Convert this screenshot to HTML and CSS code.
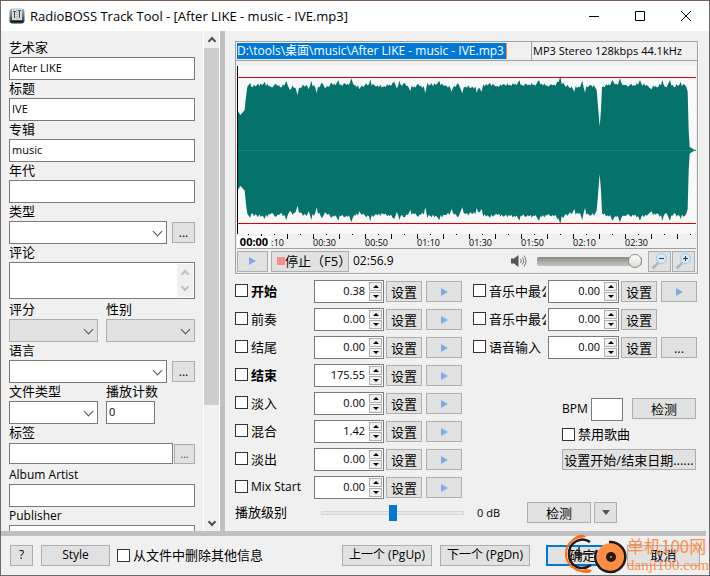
FILE: index.html
```
<!DOCTYPE html>
<html lang="zh-CN">
<head>
    <meta charset="utf-8">
    <title>RadioBOSS Track Tool</title>
    <link rel="stylesheet" href="styles.css">
</head>
<body>
<div class="window">
    <header class="titlebar">
        <svg class="app-icon" width="16" height="16" viewBox="0 0 16 16">
            <defs>
                <linearGradient id="metal" x1="0" y1="0" x2="0" y2="1">
                    <stop offset="0" stop-color="#aeb6bb"/>
                    <stop offset="0.6" stop-color="#59656d"/>
                    <stop offset="1" stop-color="#1f2a33"/>
                </linearGradient>
            </defs>
            <rect x="0.5" y="0.5" width="15" height="15" rx="3" fill="url(#metal)"/>
            <path d="M3 1v11h10V1z" fill="#d5dadd"/>
            <path d="M5.500 3v7M10.500 3v7" stroke="#3d464d" stroke-width="1"/>
            <path d="M4 3.500h3M9 2.500h3" stroke="#555"/>
            <path d="M8 2v9" stroke="#8d969c" stroke-dasharray="1 1"/>
            <path d="M2 13.500h12" stroke="#101820"/>
        </svg>
        <h1>RadioBOSS Track Tool - [After LIKE - music - IVE.mp3]</h1>
        <div class="win-buttons">
            <button type="button" aria-label="Minimize"><svg width="12" height="12"><path d="M1 6.500h10"/></svg></button>
            <button type="button" aria-label="Maximize"><svg width="12" height="12"><path d="M1.500 1.500h9v9h-9z"/></svg></button>
            <button type="button" aria-label="Close"><svg width="12" height="12"><path d="M1 1l10 10M11 1L1 11"/></svg></button>
        </div>
    </header>

    <main class="main">
        <aside class="side">
            <form class="tags">
                <div class="field"><label for="artist">艺术家</label><input type="text" id="artist" value="After LIKE"></div>
                <div class="field"><label for="title">标题</label><input type="text" id="title" value="IVE"></div>
                <div class="field"><label for="album">专辑</label><input type="text" id="album" value="music"></div>
                <div class="field"><label for="year">年代</label><input type="text" id="year"></div>
                <div class="field">
                    <label for="genre">类型</label>
                    <div class="with-button">
                        <div class="combo"><select id="genre"><option></option></select></div>
                        <button type="button" class="dots">...</button>
                    </div>
                </div>
                <div class="field">
                    <label for="comment">评论</label>
                    <div class="memo">
                        <textarea id="comment"></textarea>
                        <div class="memo-scroll"><i class="chev up"></i><i class="chev"></i></div>
                    </div>
                </div>
                <div class="pair">
                    <div class="field"><label for="rating">评分</label><div class="combo off"><select id="rating" disabled><option></option></select></div></div>
                    <div class="field"><label for="gender">性别</label><div class="combo off"><select id="gender" disabled><option></option></select></div></div>
                </div>
                <div class="field">
                    <label for="lang">语言</label>
                    <div class="with-button">
                        <div class="combo"><select id="lang"><option></option></select></div>
                        <button type="button" class="dots">...</button>
                    </div>
                </div>
                <div class="pair">
                    <div class="field"><label for="ftype">文件类型</label><div class="combo"><select id="ftype"><option></option></select></div></div>
                    <div class="field"><label for="count">播放计数</label><input type="text" id="count" class="count" value="0"></div>
                </div>
                <div class="field">
                    <label for="tag">标签</label>
                    <div class="with-button tight">
                        <input type="text" id="tag">
                        <button type="button" class="dots blue">...</button>
                    </div>
                </div>
                <div class="field latin"><label for="albumartist">Album Artist</label><input type="text" id="albumartist"></div>
                <div class="field latin"><label for="publisher">Publisher</label><input type="text" id="publisher"></div>
            </form>
            <div class="scrollbar"><i class="chev up"></i><div class="thumb"></div><i class="chev"></i></div>
        </aside>

        <section class="editor">
            <div class="player">
                <div class="file-row">
                    <div class="path-cell"><input type="text" class="path" aria-label="File" value="D:\tools\桌面\music\After LIKE - music - IVE.mp3"></div>
                    <div class="format">MP3 Stereo 128kbps 44.1kHz</div>
                </div>
                <svg class="wave" viewBox="0 0 1377 504" preserveAspectRatio="none">
                    <polygon id="wave" fill="#05736c"/>
                    <path d="M0 253.500H1377" stroke="#0b8a84" stroke-width="3"/>
                    <path d="M0 34.500H1377M0 472.500H1377" stroke="#dc0000" stroke-width="3"/>
                    <path d="M1.500 0V504" stroke="#000" stroke-width="3"/>
                </svg>
                <div class="ruler">
                    <div class="ruler-labels" id="ruler"></div>
                    <b class="position">00:00</b>
                </div>
                <div class="transport">
                    <button type="button" class="btn play" aria-label="Play"></button>
                    <button type="button" class="btn stop"><i></i>停止（F5）</button>
                    <span class="time">02:56.9</span>
                    <svg class="speaker" width="16" height="14" viewBox="0 0 16 14">
                        <path d="M0 4.500h3L7.500 1v12L3 9.500H0z" fill="#555"/>
                        <path d="M9.500 5q1.500 2 0 4M11.500 3.500q2.500 3.500 0 7M13 1.500q4 5.500 0 11" fill="none" stroke="#777"/>
                    </svg>
                    <input type="range" class="volume" aria-label="Volume" min="0" max="100" value="100">
                    <button type="button" class="btn zoom" aria-label="Zoom out">
                        <svg width="17" height="17" viewBox="0 0 17 17">
                            <path d="M1.500 15.500L7 10" stroke="#a9b4bf" stroke-width="2.500"/>
                            <circle cx="10.500" cy="5.500" r="5" fill="#d3eafc" stroke="#9cc6e8"/>
                            <path d="M8 5.500h5" stroke="#333"/>
                        </svg>
                    </button>
                    <button type="button" class="btn zoom" aria-label="Zoom in">
                        <svg width="17" height="17" viewBox="0 0 17 17">
                            <path d="M1.500 15.500L7 10" stroke="#a9b4bf" stroke-width="2.500"/>
                            <circle cx="10.500" cy="5.500" r="5" fill="#d3eafc" stroke="#9cc6e8"/>
                            <path d="M8 5.500h5M10.500 3v5" stroke="#333"/>
                        </svg>
                    </button>
                </div>
            </div>

            <div class="cues">
                <div class="cue-list" id="cuesLeft"></div>
                <div class="cue-right">
                    <div class="cue-list wide" id="cuesRight"></div>
                    <div class="extras">
                        <div class="bpm">
                            <label for="bpm">BPM</label>
                            <input type="text" id="bpm">
                            <button type="button" class="btn detect">检测</button>
                        </div>
                        <label class="check"><input type="checkbox"><span>禁用歌曲</span></label>
                        <button type="button" class="btn dates">设置开始/结束日期......</button>
                    </div>
                </div>
            </div>

            <div class="level">
                <label for="level">播放级别</label>
                <input type="range" id="level" class="gain" min="-10" max="10" value="0">
                <span class="db">0 dB</span>
                <button type="button" class="btn detect">检测</button>
                <button type="button" class="btn drop" aria-label="More"><i></i></button>
            </div>
        </section>
    </main>

    <footer class="footer">
        <button type="button" class="btn help">?</button>
        <button type="button" class="btn style">Style</button>
        <label class="check"><input type="checkbox"><span>从文件中删除其他信息</span></label>
        <div class="nav">
            <button type="button" class="btn">上一个 (PgUp)</button>
            <button type="button" class="btn">下一个 (PgDn)</button>
        </div>
        <button type="button" class="btn ok">确定</button>
        <button type="button" class="btn cancel">取消</button>
        <div class="stamp">
            <svg width="64" height="42" viewBox="0 0 64 42">
                <path d="M21 3C8 4 2 14 3 23c1 8 8 15 21 16" fill="none" stroke="#ff6d0a" stroke-width="2"/>
                <path d="M10 6q5-5 11-4l2 2-7 1zM17 38l9 2 3-3-6-1z" fill="#ff6d0a"/>
                <path d="M27 9C18 3 6 9 6 21s12 18 22 11" fill="none" stroke="#231815" stroke-width="2.500"/>
                <path d="M12 21h18M16 14v13" stroke="#231815" stroke-width="1.500"/>
                <circle cx="48" cy="24" r="14" fill="#ff8d42"/>
                <path d="M46 9a15 15 0 1 1-12 8" fill="none" stroke="#231815" stroke-width="2.500"/>
                <circle cx="48" cy="24" r="5" fill="#231815"/>
                <circle cx="48" cy="24" r="1" fill="#ff8d42"/>
            </svg>
            <div class="stamp-text"><span>单机100网</span><span>danji100.com</span></div>
        </div>
    </footer>
</div>
<script src="script.js"></script>
</body>
</html>
```
FILE: styles.css
```
* {
    box-sizing: border-box;
}
body {
    margin: 0;
    background: #f0f0f0;
    color: #000;
    font: 12px/18px "Open Sans", "Noto Sans CJK SC", sans-serif;
}
button, input, select, textarea {
    font: inherit;
    color: inherit;
    margin: 0;
    border-radius: 0;
}
label, .btn {
    font-size: 13px;
    white-space: nowrap;
}
.window {
    display: flex;
    flex-direction: column;
    min-height: 100vh;
    border: 1px solid #6a6a6a;
    border-top-color: #7b6055;
    position: relative;
}

/* title bar */
.titlebar {
    display: flex;
    align-items: center;
    height: 30px;
    padding-left: 8px;
    background: #fff;
}
.titlebar h1 {
    flex: 1;
    margin: 0 0 0 5px;
    font-size: 13px;
    font-weight: normal;
}
.win-buttons {
    display: flex;
}
.win-buttons button {
    display: flex;
    align-items: center;
    justify-content: center;
    width: 46px;
    height: 30px;
    padding: 0;
    border: 0;
    background: none;
}
.win-buttons svg {
    fill: none;
    stroke: #000;
}

.main {
    display: flex;
    flex: 1;
}

/* tags */
.side {
    display: flex;
    width: 224px;
    height: 500px;
    border-right: 5px solid #c0c0c0;
    overflow: hidden;
}
.tags {
    flex: 1;
    padding: 8px 8px 0;
}
.field label {
    display: block;
    height: 18px;
    line-height: 16px;
}
.latin label {
    font-size: 12px;
    line-height: 18px;
}
input[type=text], select, textarea {
    display: block;
    width: 100%;
    height: 23px;
    padding: 0 2px 2px;
    border: 1px solid #7a7a7a;
    background: #fff;
    outline: none;
    font-size: 11px;
}
.with-button {
    display: flex;
    align-items: center;
    gap: 5px;
}
.with-button .combo, .with-button input {
    flex: 1;
}
.dots {
    width: 23px;
    height: 21px;
    padding: 0;
    border: 1px solid #adadad;
    background: #e1e1e1;
    line-height: 16px;
}
.tight {
    gap: 1px;
    margin: 1px 0 2px;
}
.tight input[type=text] {
    height: 21px;
}
.blue {
    width: 21px;
    height: 20px;
    font-size: 10px;
    color: #00507a;
}
.combo {
    position: relative;
}
.combo select {
    appearance: none;
}
.combo::after, .chev {
    content: "";
    width: 6px;
    height: 6px;
    border: solid #555;
    border-width: 0 1px 1px 0;
    transform: rotate(45deg);
}
.combo::after {
    position: absolute;
    right: 6px;
    top: 7px;
    pointer-events: none;
}
.off select {
    background: #e1e1e1;
    border-color: #adadad;
    opacity: 1;
}
.memo {
    display: flex;
    height: 37px;
    margin-bottom: 2px;
    padding: 1px;
    border: 1px solid #7a7a7a;
    background: #fff;
}
.memo textarea {
    flex: 1;
    height: 100%;
    border: 0;
    resize: none;
}
.memo-scroll {
    display: flex;
    flex-direction: column;
    align-items: center;
    justify-content: space-between;
    width: 16px;
    padding: 7px 0;
    background: #f0f0f0;
}
.chev {
    display: block;
    border-width: 0 2px 2px 0;
    border-color: #505050;
}
.chev.up {
    transform: rotate(225deg);
}
.memo .chev {
    border-color: #bfbfbf;
}
.pair {
    display: grid;
    grid-template-columns: 1fr 1fr;
    gap: 8px;
}
.count[type=text] {
    width: 49px;
}
.scrollbar {
    display: flex;
    flex-direction: column;
    align-items: center;
    width: 17px;
    padding: 7px 0 6px;
    border: solid #fff;
    border-width: 0 1px;
}
.scrollbar .thumb {
    width: 15px;
    height: 357px;
    margin: 4px 0 auto;
    background: #cdcdcd;
}

/* player */
.editor {
    flex: 1;
    min-width: 0;
    padding: 10px 11px 0 10px;
}
.player {
    border: 1px solid #a0a0a0;
    box-shadow: 1px 1px #fff;
}
.file-row {
    display: flex;
    height: 19px;
    border-bottom: 1px solid #a0a0a0;
}
.path-cell {
    flex: 1;
    padding: 1px;
}
.path-cell .path {
    width: 270px;
    height: 16px;
    padding: 0;
    border: 0;
    border-right: 1px solid #ff8728;
    background: #0078d7;
    color: #fff;
    font-size: 12px;
}
.format {
    width: 166px;
    padding-left: 1px;
    border-left: 1px solid #a0a0a0;
    font-size: 11px;
    white-space: nowrap;
}
.wave {
    display: block;
    width: calc(100% - 2px);
    height: 168px;
    margin: 5px 1px 0;
    background: #f9f9f9;
}
.ruler {
    position: relative;
    height: 15px;
    margin: 0 1px;
    border-bottom: 1px solid #a0a0a0;
    background:
        repeating-linear-gradient(90deg, transparent 0 24px, #000 24px 25px, transparent 25px 26px) 0 0 / 100% 5px no-repeat,
        repeating-linear-gradient(90deg, transparent 0 11px, #000 11px 12px, transparent 12px 26px) 0 0 / 100% 1px no-repeat;
}
.ruler-labels {
    display: flex;
    padding: 3px 0 0 24px;
    overflow: hidden;
}
.ruler-labels span {
    flex: none;
    width: 52px;
    font-size: 9px;
    line-height: 12px;
}
.position {
    position: absolute;
    left: 0;
    bottom: 0;
    width: 34px;
    background: #fff;
    font-size: 11px;
    line-height: 12px;
    text-align: center;
}
.transport {
    display: flex;
    align-items: center;
    height: 24px;
    padding: 0 2px 0 1px;
}
.btn {
    display: flex;
    align-items: center;
    justify-content: center;
    height: 21px;
    padding: 0;
    border: 1px solid #adadad;
    background: #e1e1e1;
}
.play::before {
    content: "";
    border: solid transparent;
    border-width: 4px 0 4px 7px;
    border-left-color: #7eaaea;
}
.transport .play {
    width: 31px;
}
.stop {
    justify-content: flex-start;
    width: 78px;
    margin: 0 4px 0 3px;
    padding-left: 5px;
}
.stop i {
    flex: none;
    width: 8px;
    height: 8px;
    background: #f98e8e;
}
.time {
    flex: 1;
}
.speaker {
    margin-right: 10px;
}
.zoom {
    width: 23px;
    margin-left: 1px;
}
input[type=range] {
    appearance: none;
    background: none;
}
.volume {
    width: 105px;
    height: 16px;
    margin-right: 5px;
}
.volume::-webkit-slider-runnable-track {
    height: 9px;
    border-radius: 2px;
    background: linear-gradient(#8c8a85, #c9c6c0);
}
.volume::-webkit-slider-thumb {
    appearance: none;
    width: 14px;
    height: 14px;
    margin-top: -3px;
    border: 1px solid #8a8a86;
    border-radius: 50%;
    background: linear-gradient(#fff, #dcdcd8);
}

/* cue points */
.cues {
    display: flex;
    justify-content: space-between;
    margin-top: 6px;
}
.cue {
    display: grid;
    grid-template-columns: 79px 70px 36px 36px;
    align-items: center;
    height: 28px;
    padding-bottom: 5px;
}
.cue:last-child {
    height: 26px;
    padding-bottom: 3px;
}
.wide .cue {
    grid-template-columns: 75px 71px 36px 36px;
}
.cue .btn {
    margin-left: 2px;
    width: 36px;
}
.cue .btn:last-child:not(.set) {
    margin-left: 6px;
}
.check {
    display: flex;
    align-items: center;
    overflow: hidden;
}
.cue .check {
    height: 23px;
    margin-right: 2px;
    padding-bottom: 2px;
}
.check input {
    flex: none;
    appearance: none;
    width: 13px;
    height: 13px;
    margin-right: 3px;
    border: 1px solid #333;
    background: #fff;
}
.main-cue {
    font-weight: bold;
}
.small {
    font-size: 12px;
}
.spin {
    position: relative;
}
.spin input[type=text] {
    padding-right: 18px;
    text-align: right;
}
.spin-buttons {
    position: absolute;
    right: 2px;
    top: 2px;
    display: grid;
    gap: 1px;
}
.spin-buttons button {
    display: flex;
    align-items: center;
    justify-content: center;
    width: 13px;
    height: 9px;
    padding: 0;
    border: 1px solid #adadad;
    background: #f0f0f0;
}
.spin-buttons button::before {
    content: "";
    border: solid transparent;
    border-width: 0 3px 3px;
    border-bottom-color: #000;
}
.spin-buttons .down::before {
    border-width: 3px 3px 0;
    border-top-color: #000;
}
.cue-right {
    display: flex;
    flex-direction: column;
    justify-content: space-between;
    width: 225px;
}
.extras {
    display: grid;
    justify-items: start;
    gap: 4px;
    margin: 0 2px 32px auto;
}
.bpm {
    display: flex;
}
.bpm label {
    width: 29px;
    padding-top: 2px;
    font-size: 12px;
}
.bpm input[type=text] {
    width: 32px;
    margin-right: 9px;
}
.detect {
    width: 64px;
}
.dates {
    width: 134px;
    margin-top: 2px;
}
.level {
    display: flex;
    align-items: center;
    height: 21px;
}
.level label {
    line-height: 21px;
}
.gain {
    flex: 1;
    height: 16px;
    margin: 0 13px 0 34px;
}
.gain::-webkit-slider-runnable-track {
    height: 4px;
    border: 1px solid #d6d6d6;
    background: #e7eaea;
}
.gain::-webkit-slider-thumb {
    appearance: none;
    width: 8px;
    height: 16px;
    margin-top: -7px;
    background: #0078d7;
}
.db {
    width: 50px;
    font-size: 11px;
}
.drop {
    width: 23px;
    margin: 0 81px 0 3px;
}
.drop i {
    border: solid transparent;
    border-width: 5px 4px 0;
    border-top-color: #555;
}

/* footer */
.footer {
    display: flex;
    align-items: center;
    height: 44px;
    padding: 4px 9px 0 9px;
    background: linear-gradient(#c0c0c0, #c0c0c0) 0 0 / calc(100% - 3px) 5px no-repeat;
}
.help {
    width: 23px;
    margin-right: 8px;
    font-size: 12px;
}
.style {
    width: 69px;
    margin-right: 7px;
    font-size: 12px;
}
.nav {
    display: flex;
    gap: 8px;
    margin: 0 16px 0 auto;
}
.nav .btn {
    width: 90px;
    font-size: 12px;
}
.ok {
    width: 73px;
    margin-right: 8px;
    border: 2px solid #0078d7;
}
.cancel {
    width: 73px;
}
.stamp {
    position: absolute;
    right: 1px;
    bottom: 0;
    display: flex;
    pointer-events: none;
    color: #ff8d4a;
}
.stamp-text {
    width: 81px;
    padding-top: 3px;
    font: 17px/20px "Noto Sans CJK SC", sans-serif;
    white-space: nowrap;
}
.stamp-text span {
    display: block;
}
.stamp-text span + span {
    font: 15px/18px "Liberation Serif", serif;
}
```
FILE: script.js
```
// top edge of the waveform, three units to a pixel, mirrored below the middle line
var MIDDLE = 253;
var peaks = [
    [3, 135], [10, 147], [23, 132], [27, 92], [31, 62], [39, 50], [47, 64], [63, 52], [83, 47], [103, 64],
    [114, 54], [134, 64], [148, 44], [159, 72], [171, 66], [182, 87], [194, 64], [209, 57], [215, 70], [223, 44],
    [239, 82], [254, 50], [264, 67], [284, 50], [304, 42], [324, 52], [343, 37], [367, 70], [384, 57], [400, 40],
    [414, 60], [434, 64], [472, 47], [479, 67], [487, 44], [504, 52], [520, 75], [544, 54], [565, 82], [571, 50],
    [584, 52], [607, 44], [629, 60], [644, 77], [661, 52], [676, 82], [686, 62], [699, 67], [719, 80], [734, 77],
    [739, 54], [759, 50], [774, 60], [799, 54], [847, 42], [864, 54], [906, 42], [939, 57], [961, 47], [970, 30],
    [979, 50], [999, 67], [1012, 77], [1029, 64], [1036, 44], [1044, 80], [1059, 57], [1079, 72], [1084, 132],
    [1088, 182], [1092, 132], [1095, 64], [1126, 42], [1149, 37], [1164, 57], [1179, 57], [1209, 42], [1229, 57],
    [1244, 70], [1264, 62], [1276, 42], [1289, 64], [1299, 42], [1311, 64], [1331, 47], [1344, 57], [1352, 77],
    [1355, 192], [1358, 243], [1369, 250], [1377, 253]
];

function drawWave() {
    var jag = [0, 5, -3, 4, 2, 6, -2, 3];
    var top = [], bottom = [], n = 0;
    for (var i = 0; i < peaks.length; i++) {
        var p = peaks[i], next = peaks[i + 1];
        top.push([p[0], p[1]]);
        if (!next) break;
        for (var x = p[0] + 4; x < next[0] - 3; x += 4) {
            var y = p[1] + (next[1] - p[1]) * (x - p[0]) / (next[0] - p[0]);
            // pull towards the usual loudness so that peaks stay narrow
            if (p[1] < 100 && next[1] < 100) y = (y + 2 * 57) / 3 + jag[n++ % 8];
            top.push([x, y]);
        }
    }
    for (var j = top.length - 1; j >= 0; j--) {
        bottom.push([top[j][0], 2 * MIDDLE - top[j][1]]);
    }
    document.getElementById('wave').setAttribute('points', top.concat(bottom).join(' '));
}

function drawRuler() {
    var times = ['00:10', '00:30', '00:50', '01:10', '01:30', '01:50', '02:10', '02:30'];
    var s = '';
    for (var i = 0; i < times.length; i++) {
        s += '<span>' + times[i] + '</span>';
    }
    document.getElementById('ruler').innerHTML = s;
}

function drawCues(id, cues) {
    var s = '';
    for (var i = 0; i < cues.length; i++) {
        var c = cues[i];
        s += '<div class="cue">' +
            '<label class="check ' + (c.look || '') + '"><input type="checkbox"><span>' + c.name + '</span></label>' +
            '<div class="spin"><input type="text" aria-label="' + c.name + '" value="' + c.value + '">' +
            '<div class="spin-buttons"><button type="button" aria-label="+"></button><button type="button" class="down" aria-label="-"></button></div></div>' +
            '<button type="button" class="btn set">设置</button>';
        if (c.last == 'play') s += '<button type="button" class="btn play" aria-label="Play"></button>';
        if (c.last == 'dots') s += '<button type="button" class="btn">...</button>';
        s += '</div>';
    }
    document.getElementById(id).innerHTML = s;
}

drawWave();
drawRuler();
drawCues('cuesLeft', [
    {name: '开始', value: '0.38', last: 'play', look: 'main-cue'},
    {name: '前奏', value: '0.00', last: 'play'},
    {name: '结尾', value: '0.00', last: 'play'},
    {name: '结束', value: '175.55', last: 'play', look: 'main-cue'},
    {name: '淡入', value: '0.00', last: 'play'},
    {name: '混合', value: '1.42', last: 'play'},
    {name: '淡出', value: '0.00', last: 'play'},
    {name: 'Mix Start', value: '0.00', last: 'play', look: 'small'}
]);
drawCues('cuesRight', [
    {name: '音乐中最公', value: '0.00', last: 'play'},
    {name: '音乐中最公', value: '0.00'},
    {name: '语音输入', value: '0.00', last: 'dots'}
]);
```
